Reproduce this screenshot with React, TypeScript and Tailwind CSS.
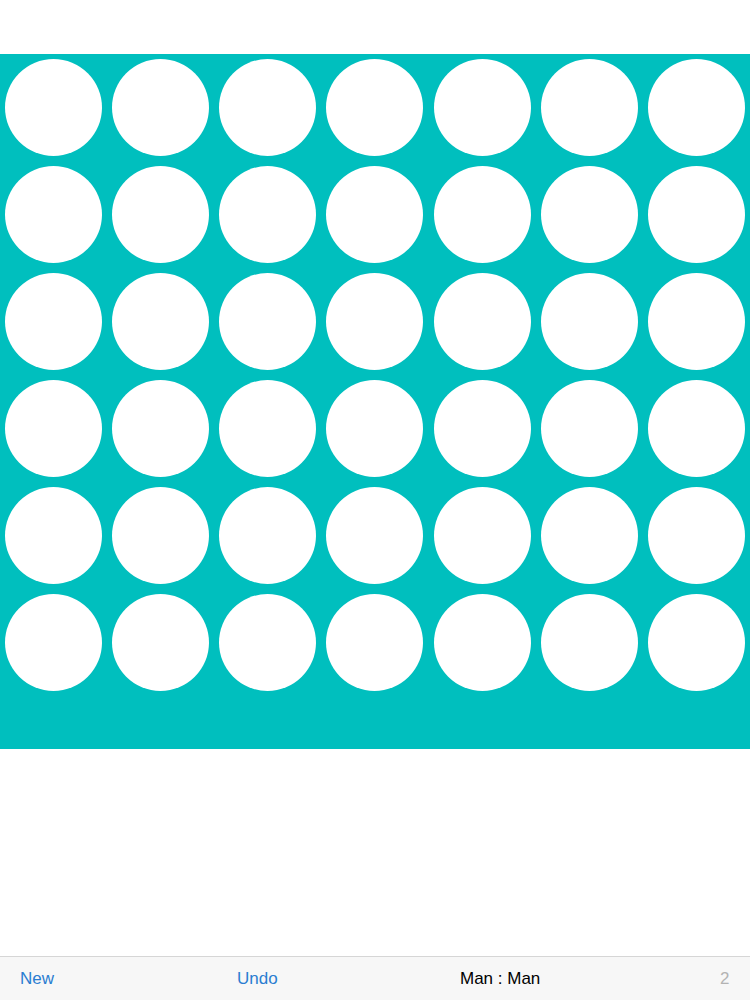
const ROWS = 6
const COLS = 7

function Board() {
  return (
    <div className="mt-[54px] h-[695px] w-full bg-[#00bfbe]">
      <div className="grid grid-cols-7">
        {Array.from({ length: ROWS * COLS }).map((_, i) => (
          <div key={i} className="flex h-[107px] items-center justify-center">
            <div className="h-[97px] w-[97px] rounded-full bg-white" />
          </div>
        ))}
      </div>
    </div>
  )
}

function Toolbar() {
  return (
    <div className="mt-auto flex h-[44px] items-center border-t border-[#d6d6d6] bg-[#f7f7f7] pl-[20px] text-[17px] font-['Liberation_Sans',Arial,sans-serif]">
      <span className="w-[217px] text-[#2a7dd1]">New</span>
      <span className="w-[223px] text-[#2a7dd1]">Undo</span>
      <span className="w-[260px] text-black">Man : Man</span>
      <span className="text-[#b3b3b3]">2</span>
    </div>
  )
}

export default function App() {
  return (
    <div className="flex h-[1000px] w-[750px] flex-col bg-white">
      <Board />
      <Toolbar />
    </div>
  )
}
